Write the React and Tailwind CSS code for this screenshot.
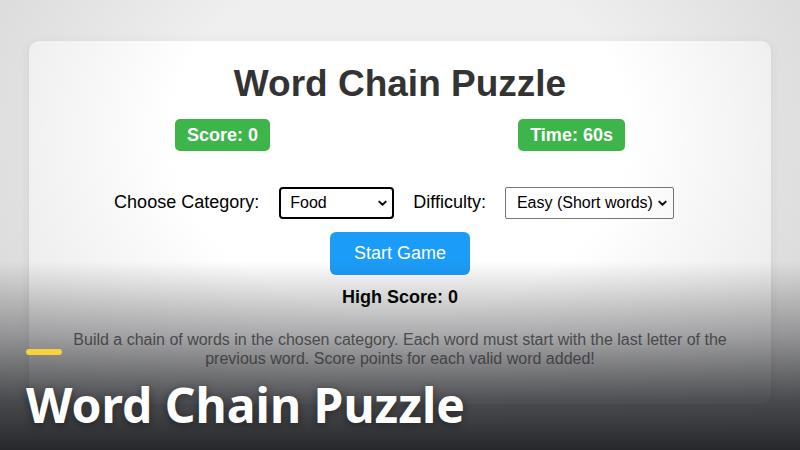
import { useState } from 'react'

const CATEGORIES = ['Food', 'Animals', 'Countries', 'Sports']
const LEVELS = ['Easy (Short words)', 'Medium', 'Hard (Long words)']

function Chevron() {
  return (
    <svg
      viewBox="0 0 12 12"
      className="pointer-events-none absolute right-[6px] top-1/2 h-[11px] w-[11px] -translate-y-1/2"
      fill="none"
      stroke="#111"
      strokeWidth="2.2"
      strokeLinecap="round"
      strokeLinejoin="round"
    >
      <path d="M2.5 4.5 6 8l3.5-3.5" />
    </svg>
  )
}

export default function App() {
  const [category, setCategory] = useState('Food')
  const [level, setLevel] = useState(LEVELS[0])
  const score = 0
  const timeLeft = 60
  const highScore = 0

  return (
    <div className="relative h-[450px] w-[800px] overflow-hidden bg-[#efefef] font-['Liberation_Sans',Arial,sans-serif]">
      <div className="flex justify-center pt-[41px]">
        <div className="w-[742px] rounded-[10px] bg-white px-[22px] pt-[22px] pb-[36px] text-center shadow-[0_2px_12px_rgba(0,0,0,0.08)]">
          <h1 className="text-[37px] font-bold leading-[1.15] text-[#333]">Word Chain Puzzle</h1>

          <div className="mt-[13px] flex justify-around">
            <span className="rounded-[5px] bg-[#3db54a] px-3 py-[5px] text-[18px] font-bold leading-[22px] text-white">
              Score: {score}
            </span>
            <span className="rounded-[5px] bg-[#3db54a] px-3 py-[5px] text-[18px] font-bold leading-[22px] text-white">
              Time: {timeLeft}s
            </span>
          </div>

          <div className="mt-[36px] flex items-center justify-center pr-[12px] text-[18px] text-black">
            <label>Choose Category:</label>
            <div className="relative ml-[20px]">
              <select
                value={category}
                onChange={(e) => setCategory(e.target.value)}
                className="h-[32px] w-[115px] appearance-none rounded-[4px] border-2 border-black bg-white pl-[9px] text-[16px] text-black outline-none"
              >
                {CATEGORIES.map((c) => (
                  <option key={c}>{c}</option>
                ))}
              </select>
              <Chevron />
            </div>
            <label className="ml-[19px]">Difficulty:</label>
            <div className="relative ml-[19px]">
              <select
                value={level}
                onChange={(e) => setLevel(e.target.value)}
                className="h-[32px] w-[169px] appearance-none rounded-[2px] border border-[#767676] bg-white pl-[11px] text-[16px] text-black outline-none"
              >
                {LEVELS.map((l) => (
                  <option key={l}>{l}</option>
                ))}
              </select>
              <Chevron />
            </div>
          </div>

          <button className="mt-[13px] rounded-[6px] bg-[#1b9cf8] px-6 py-[11px] text-[18px] leading-[21px] text-white">
            Start Game
          </button>

          <p className="mt-[12px] text-[18px] font-bold leading-[1.15] text-black">High Score: {highScore}</p>

          <p className="mt-[24px] text-[16px] leading-[1.15] text-[#666]">
            Build a chain of words in the chosen category. Each word must start with the last letter of the previous
            word. Score points for each valid word added!
          </p>
        </div>
      </div>

      {/* edge vignette + dark fade for the caption */}
      <div className="pointer-events-none absolute inset-0 bg-[radial-gradient(ellipse_at_50%_30%,transparent_40%,rgba(0,0,0,0.13)_100%)]" />
      <div className="pointer-events-none absolute inset-0 bg-[linear-gradient(to_bottom,transparent_58%,rgba(39,40,44,0.4)_75%,rgba(39,40,44,0.8)_89%,#27282c_100%)]" />

      <div className="absolute bottom-[15px] left-[26px]">
        <div className="h-[6px] w-[36px] rounded-full bg-[#f7d33b]" />
        <h2 className="mt-[20px] font-['Noto_Sans',sans-serif] text-[48px] font-bold leading-[60px] text-white [text-shadow:0_2px_8px_rgba(0,0,0,0.45)]">
          Word Chain Puzzle
        </h2>
      </div>
    </div>
  )
}
